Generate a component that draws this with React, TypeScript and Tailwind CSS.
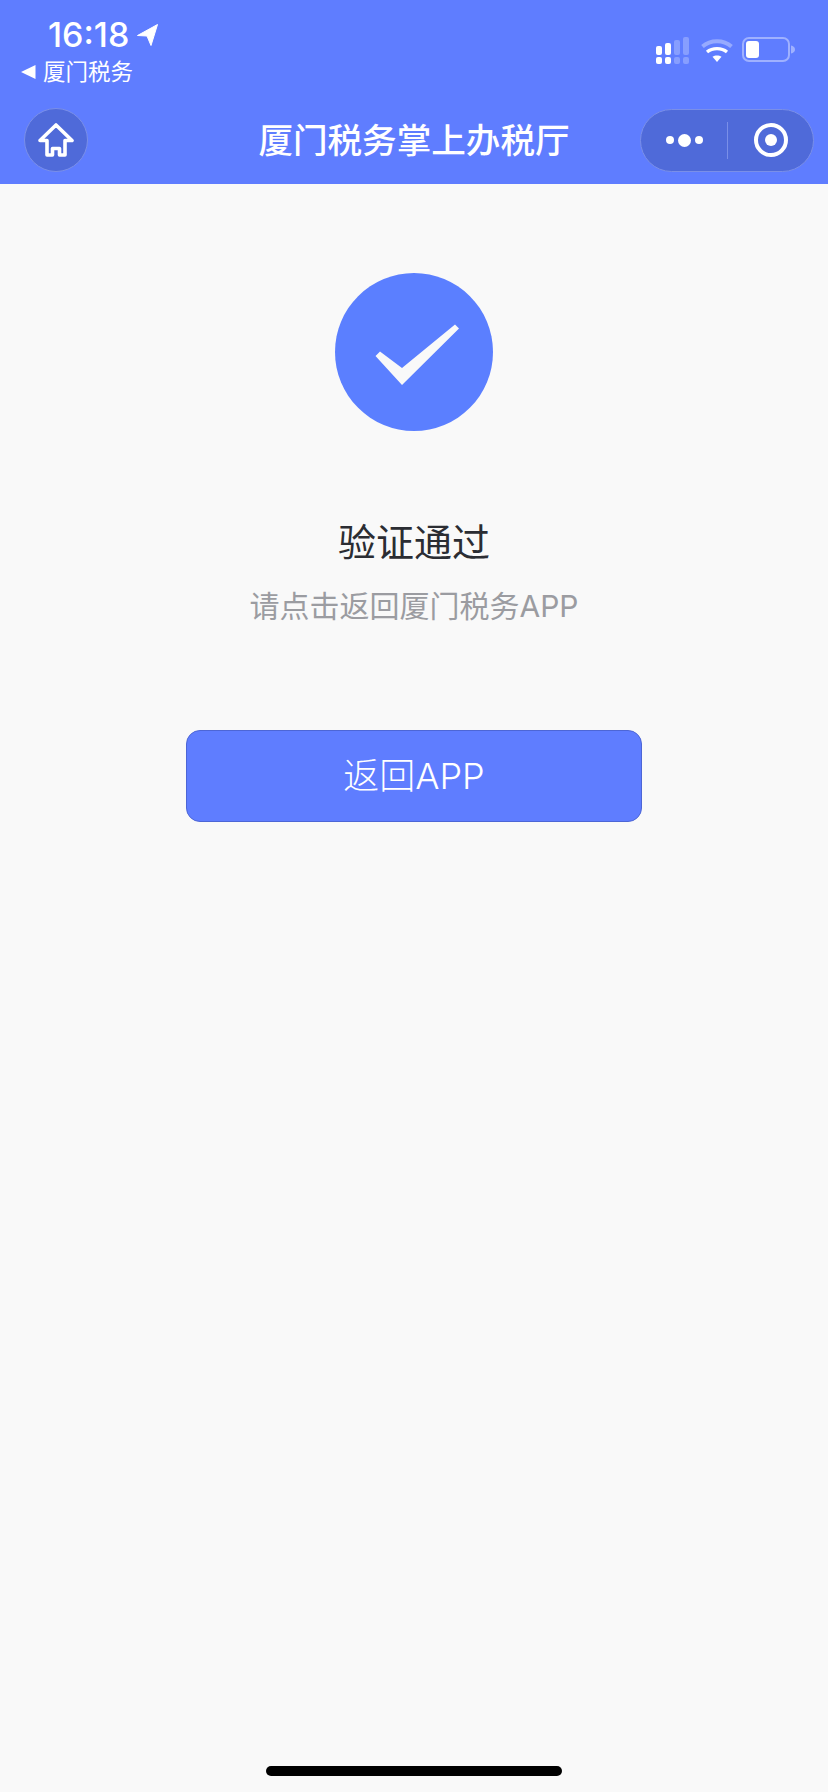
const cjk = { fontFamily: 'Inter, "Noto Sans CJK SC", sans-serif' };

function StatusIcons() {
  return (
    <div className="flex items-start gap-[12px] pt-[37px]">
      <svg width="34" height="27" viewBox="0 0 34 27" fill="#fff">
        <rect x="0" y="9" width="6" height="9" rx="2" />
        <rect x="0" y="20" width="6" height="7" rx="2" />
        <rect x="9" y="6" width="6" height="12" rx="2" />
        <rect x="9" y="20" width="6" height="7" rx="2" />
        <g opacity="0.25">
          <rect x="18" y="3" width="6" height="15" rx="2" />
          <rect x="18" y="20" width="6" height="7" rx="2" />
          <rect x="27" y="0" width="6" height="18" rx="2" />
          <rect x="27" y="20" width="6" height="7" rx="2" />
        </g>
      </svg>
      <svg width="32" height="25" viewBox="0 0 32 25" className="mt-[1px] -ml-[1px]" fill="none">
        <path d="M1.5 8.5C9.5 1.5 22.5 1.5 30.5 8.5" stroke="#fff" strokeOpacity="0.35" strokeWidth="4" />
        <path d="M6 14C11.5 9.5 20.5 9.5 26 14" stroke="#fff" strokeWidth="3.4" />
        <path d="M11.5 18.7C14 17 18 17 20.5 18.7L16 24Z" fill="#fff" />
      </svg>
      <svg width="54" height="25" viewBox="0 0 54 25" className="-ml-[3px]">
        <rect x="1" y="1" width="46" height="23" rx="6" fill="none" stroke="#fff" strokeOpacity="0.4" strokeWidth="2" />
        <rect x="4" y="4" width="13" height="17" rx="3" fill="#fff" />
        <path d="M49 8.5C51.5 9 53 10.5 53 12.5C53 14.500 51.5 16 49 16.500Z" fill="#fff" fillOpacity="0.4" />
      </svg>
    </div>
  );
}

export default function App() {
  return (
    <div className="relative flex h-[1792px] w-[828px] flex-col overflow-hidden bg-[#f9f9f9]" style={cjk}>
      <header className="flex h-[184px] flex-col bg-[#5f7dff] text-white">
        <div className="flex h-[108px] items-start justify-between pr-[32px]">
          <div className="flex flex-col pl-[21px]">
            <div className="flex items-center pl-[27px] pt-[17px]">
              <span className="text-[34px] leading-[36px] font-medium">16:18</span>
              <svg width="21" height="22" viewBox="0 0 21 22" className="ml-[8px]" fill="#fff">
                <path d="M20.500 0.500L14 21.500L10 12L0.500 11.500Z" strokeLinejoin="round" stroke="#fff" />
              </svg>
            </div>
            <div className="flex items-center pt-[4px]">
              <svg width="15" height="14" viewBox="0 0 15 14" fill="#fff"><path d="M0 7L14.500 0V14Z" /></svg>
              <span className="ml-[7px] text-[22.500px] leading-[30px]">厦门税务</span>
            </div>
          </div>
          <StatusIcons />
        </div>
        <div className="grid h-[63px] grid-cols-[1fr_auto_1fr] items-center px-[14px]">
          <div className="ml-[10px] flex size-[64px] items-center justify-center rounded-full border border-[#7a8fe8] bg-[#4f6ad9]">
            <svg width="36" height="34" viewBox="0 0 36 34" fill="none" stroke="#fff" strokeWidth="3.600" strokeLinejoin="round">
              <path d="M18 2L34 17.500H27V32H21.500V25.500H14.500V32H9V17.500H2Z" />
            </svg>
          </div>
          <h1 className="text-[34.600px] leading-[44px] font-medium whitespace-nowrap">厦门税务掌上办税厅</h1>
          <div className="flex h-[63px] w-[174px] items-center justify-self-end rounded-full border border-[#7a8fe8] bg-[#4f6ad9]">
            <div className="flex w-[86px] items-center justify-center gap-[4px]">
              <span className="size-[8px] rounded-full bg-white" />
              <span className="size-[13px] rounded-full bg-white" />
              <span className="size-[8px] rounded-full bg-white" />
            </div>
            <div className="h-[37px] w-px bg-[#7a8fe8]" />
            <div className="flex flex-1 items-center justify-center">
              <span className="flex size-[34px] items-center justify-center rounded-full border-[4px] border-white">
                <span className="size-[12px] rounded-full bg-white" />
              </span>
            </div>
          </div>
        </div>
      </header>

      <main className="flex flex-col items-center pt-[89px]">
        <div className="flex size-[158px] items-center justify-center rounded-full bg-[#5b7fff] pl-[5px] pt-[6px]">
          <svg width="84" height="62" viewBox="0 0 84 62" fill="#f9f9f9">
            <path d="M0.500 32L5 27.500L27 44L80 0.500L84 4.500L27 61Z" strokeLinejoin="round" />
          </svg>
        </div>
        <h2 className="mt-[86px] text-[38px] leading-[50px] font-normal text-[#2b2d33]">验证通过</h2>
        <p className="mt-[19px] text-[30px] leading-[40px] text-[#9b9ca1]">请点击返回厦门税务APP</p>
        <button className="mt-[104px] flex h-[92px] w-[456px] items-center justify-center rounded-[14px] border border-[#4d66d6] bg-[#5f7dff] text-[36px] font-light text-white">
          返回APP
        </button>
      </main>

      <div className="mt-auto flex justify-center pb-[16px]">
        <div className="h-[10px] w-[296px] rounded-full bg-black" />
      </div>
    </div>
  );
}
